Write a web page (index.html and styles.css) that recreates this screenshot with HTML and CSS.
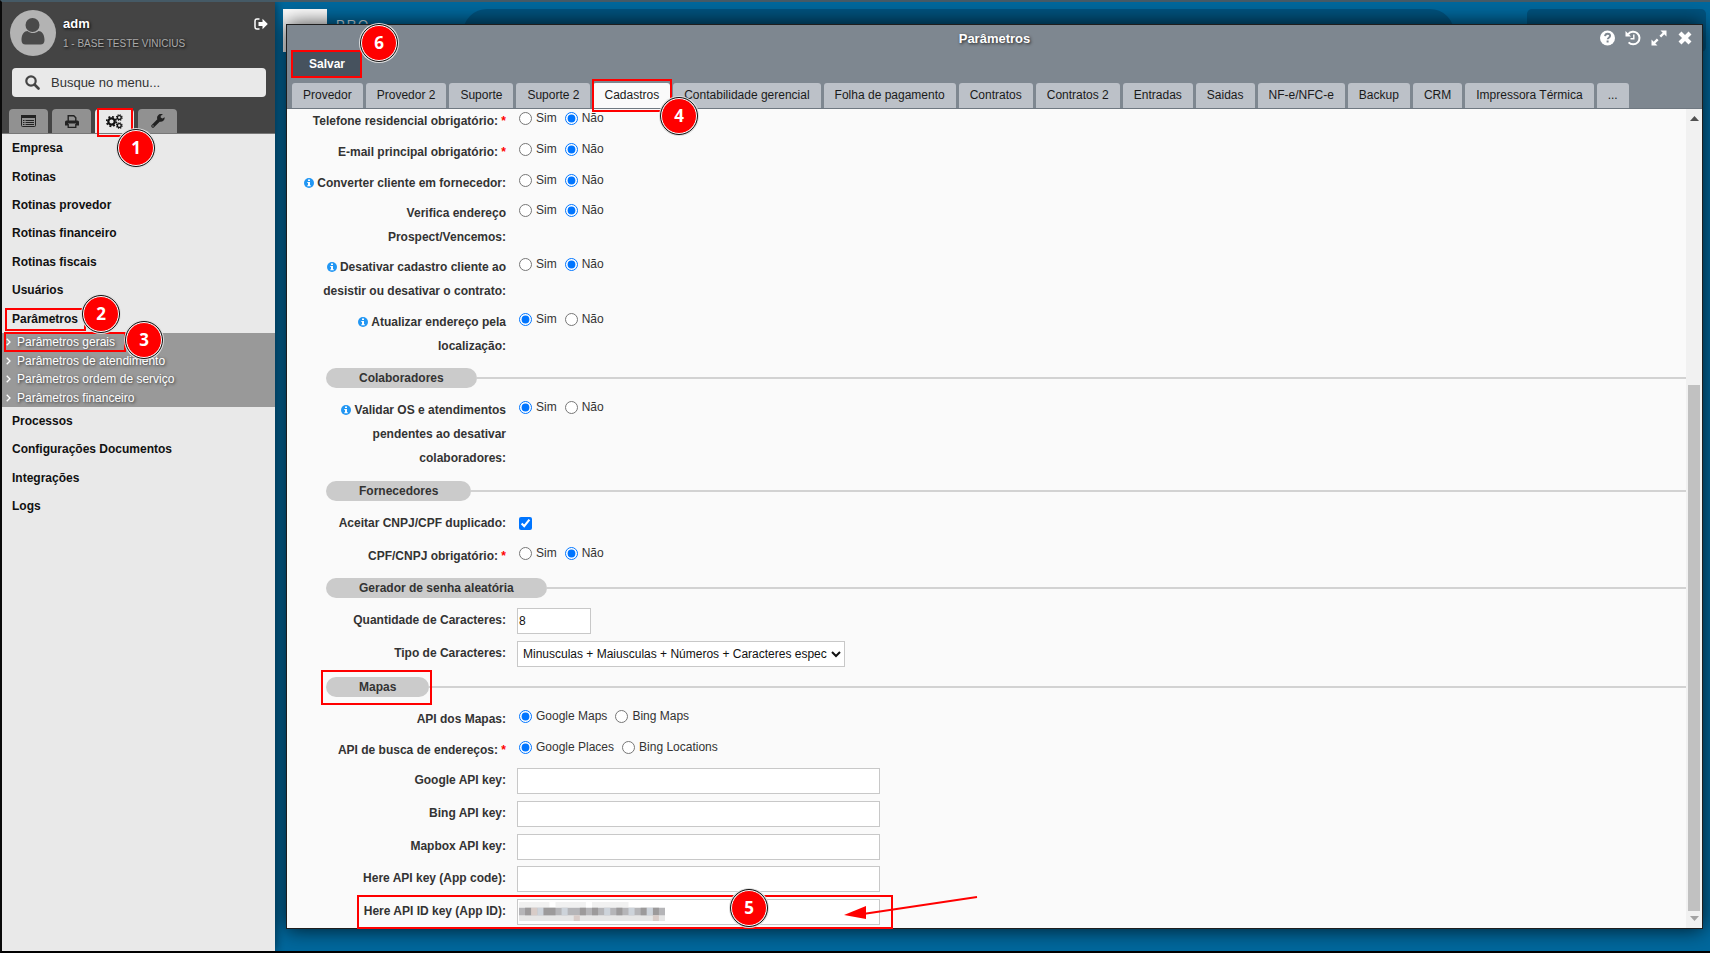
FILE: index.html
```html
<!DOCTYPE html>
<html lang="pt-BR">
<head>
<meta charset="utf-8">
<title>Parâmetros</title>
<link rel="stylesheet" href="styles.css">
</head>
<body>
<div class="app">
  <aside class="sidebar">
    <header class="side-head">
      <div class="user">
        <svg class="avatar" viewBox="0 0 46 46"><circle cx="23" cy="23" r="23" fill="#b3b3b3"/><circle cx="22.500" cy="15" r="7" fill="#4a4a4a"/><path d="M11.500 30c0-6 3-9 6-9 2 1.500 3.500 2 5.500 2s3.500-.5 5.500-2c3 0 6 3 6 9 0 3-1.500 4.500-4 4.500H15.500c-2.500 0-4-1.500-4-4.500z" fill="#4a4a4a"/></svg>
        <div class="user-text">
          <strong class="user-name">adm</strong>
          <span class="user-base">1 - BASE TESTE VINICIUS</span>
        </div>
        <button class="icon-btn logout" aria-label="Sair"><svg width="14" height="12" viewBox="0 0 14 12"><path d="M5.500 1H3a2 2 0 0 0-2 2v6a2 2 0 0 0 2 2h2.500" fill="none" stroke="#fff" stroke-width="1.500"/><path d="M4.500 4h4V.8L13.800 6 8.500 11.200V8h-4z" fill="#fff"/></svg></button>
      </div>
      <label class="search">
        <svg width="15" height="15" viewBox="0 0 15 15"><circle cx="6" cy="6" r="4.700" fill="none" stroke="#444" stroke-width="2.200"/><path d="M9.500 9.500l4 4" stroke="#444" stroke-width="2.600" stroke-linecap="round"/></svg>
        <input class="search-input" type="text" placeholder="Busque no menu..." aria-label="Busque no menu">
      </label>
      <div class="side-tabs">
        <button class="side-tab" aria-label="Janelas"><svg width="15" height="12" viewBox="0 0 15 12"><rect x=".5" y=".5" width="14" height="11" rx="1" fill="none" stroke="#222"/><path d="M0 0h15v3H0z" fill="#222"/><path d="M2 5.500h1.500M2 7.500h1.500M2 9.500h1.500M4.500 5.500H13M4.500 7.500H13M4.500 9.500H13" stroke="#222"/></svg></button>
        <button class="side-tab" aria-label="Imprimir"><svg width="14" height="13" viewBox="0 0 14 13"><path d="M3.200 6V.8h5.600l2 2V6" fill="none" stroke="#222" stroke-width="1.400"/><path d="M0 7a1.500 1.500 0 0 1 1.500-1.500h11A1.500 1.500 0 0 1 14 7v3.500h-3v-2H3v2H0z" fill="#222"/><path d="M3.200 9v3.300h7.600V9" fill="none" stroke="#222" stroke-width="1.300"/></svg></button>
        <button class="side-tab side-tab--on" aria-label="Configurações"><svg width="17" height="15" viewBox="0 0 17 15"><circle cx="5.500" cy="7.500" r="3.200" fill="none" stroke="#111" stroke-width="2.200"/><circle cx="5.500" cy="7.500" r="4.800" fill="none" stroke="#111" stroke-width="1.700" stroke-dasharray="1.900 1.870"/><circle cx="13.300" cy="3.500" r="1.900" fill="none" stroke="#111" stroke-width="1.300"/><circle cx="13.300" cy="3.500" r="2.800" fill="none" stroke="#111" stroke-width="1.100" stroke-dasharray="1.200 1"/><circle cx="13.300" cy="11.500" r="1.900" fill="none" stroke="#111" stroke-width="1.300"/><circle cx="13.300" cy="11.500" r="2.800" fill="none" stroke="#111" stroke-width="1.100" stroke-dasharray="1.200 1"/></svg></button>
        <button class="side-tab" aria-label="Ferramentas"><svg width="14" height="14" viewBox="0 0 14 14"><path d="M13.600 3.200l-2.200 1.300-1.700-1V1.700L11.900.4A4 4 0 0 0 6.300 5.300L.7 10.900a1.700 1.700 0 0 0 2.400 2.400l5.600-5.600a4 4 0 0 0 4.900-4.500zM2 12.700a.7.700 0 1 1 0-1.400.7.700 0 0 1 0 1.400z" fill="#222"/></svg></button>
      </div>
    </header>
    <nav class="menu">
      <ul class="menu-group menu-group--top">
        <li><a href="#">Empresa</a></li>
        <li><a href="#">Rotinas</a></li>
        <li><a href="#">Rotinas provedor</a></li>
        <li><a href="#">Rotinas financeiro</a></li>
        <li><a href="#">Rotinas fiscais</a></li>
        <li><a href="#">Usuários</a></li>
        <li><a href="#">Parâmetros</a></li>
      </ul>
      <ul class="submenu">
        <li><a href="#"><svg class="chev" viewBox="0 0 5 8"><path d="M.7.7L4 4 .7 7.300"/></svg>Parâmetros gerais</a></li>
        <li><a href="#"><svg class="chev" viewBox="0 0 5 8"><path d="M.7.7L4 4 .7 7.300"/></svg>Parâmetros de atendimento</a></li>
        <li><a href="#"><svg class="chev" viewBox="0 0 5 8"><path d="M.7.7L4 4 .7 7.300"/></svg>Parâmetros ordem de serviço</a></li>
        <li><a href="#"><svg class="chev" viewBox="0 0 5 8"><path d="M.7.7L4 4 .7 7.300"/></svg>Parâmetros financeiro</a></li>
      </ul>
      <ul class="menu-group menu-group--bottom">
        <li><a href="#">Processos</a></li>
        <li><a href="#">Configurações Documentos</a></li>
        <li><a href="#">Integrações</a></li>
        <li><a href="#">Logs</a></li>
      </ul>
    </nav>
  </aside>

  <main class="desktop">
    <div class="backdrop">
      <div class="logo-box"></div>
      <span class="logo-text">PRO</span>
      <div class="top-search"></div>
      <div class="top-card"></div>
    </div>
    <section class="window">
      <header class="win-head">
        <div class="win-bar">
          <h1 class="win-title">Parâmetros</h1>
          <div class="win-tools">
            <button class="icon-btn" aria-label="Ajuda"><svg width="16" height="16" viewBox="0 0 16 16"><circle cx="8.500" cy="8" r="7.500" fill="#fff"/><path d="M6 6.200c.2-1.700 1.200-2.500 2.600-2.500s2.500.9 2.500 2.100c0 1.900-2.400 1.900-2.400 3.500" fill="none" stroke="#7e8790" stroke-width="1.900"/><path d="M7.600 10.500h2v2h-2z" fill="#7e8790"/></svg></button>
            <button class="icon-btn" aria-label="Histórico"><svg width="16" height="16" viewBox="0 0 16 16"><path d="M3.200 4.200A6.300 6.300 0 1 1 3.600 12.400" fill="none" stroke="#fff" stroke-width="2"/><path d="M.5 1v5.500H6z" fill="#fff"/><path d="M8.800 4.500v4.200H5.500" fill="none" stroke="#fff" stroke-width="1.400"/></svg></button>
            <button class="icon-btn" aria-label="Expandir"><svg width="16" height="16" viewBox="0 0 16 16"><path d="M9.500.5h6v6zM.5 9.500v6h6z" fill="#fff"/><path d="M13 3L9.300 6.700M6.700 9.300L3 13" stroke="#fff" stroke-width="2.400"/></svg></button>
            <button class="icon-btn" aria-label="Fechar"><svg width="16" height="16" viewBox="0 0 16 16"><path d="M3 3l10 10M13 3L3 13" stroke="#fff" stroke-width="4.200"/></svg></button>
          </div>
        </div>
        <div class="actions"><button class="save">Salvar</button></div>
        <div class="tabs" role="tablist">
          <button class="tab" role="tab">Provedor</button>
          <button class="tab" role="tab">Provedor 2</button>
          <button class="tab" role="tab">Suporte</button>
          <button class="tab" role="tab">Suporte 2</button>
          <button class="tab tab--on" role="tab" aria-selected="true">Cadastros</button>
          <button class="tab" role="tab">Contabilidade gerencial</button>
          <button class="tab" role="tab">Folha de pagamento</button>
          <button class="tab" role="tab">Contratos</button>
          <button class="tab" role="tab">Contratos 2</button>
          <button class="tab" role="tab">Entradas</button>
          <button class="tab" role="tab">Saidas</button>
          <button class="tab" role="tab">NF-e/NFC-e</button>
          <button class="tab" role="tab">Backup</button>
          <button class="tab" role="tab">CRM</button>
          <button class="tab" role="tab">Impressora Térmica</button>
          <button class="tab" role="tab">...</button>
        </div>
      </header>
      <div class="win-body">
        <form class="form">
          <div class="row" role="radiogroup" aria-labelledby="l1">
            <span class="lab" id="l1">Telefone residencial obrigatório: <b class="req">*</b></span>
            <div class="opts"><label class="opt"><input type="radio" name="tel">Sim</label><label class="opt"><input type="radio" name="tel" checked>Não</label></div>
          </div>
          <div class="row" role="radiogroup" aria-labelledby="l2">
            <span class="lab" id="l2">E-mail principal obrigatório: <b class="req">*</b></span>
            <div class="opts"><label class="opt"><input type="radio" name="mail">Sim</label><label class="opt"><input type="radio" name="mail" checked>Não</label></div>
          </div>
          <div class="row row--tall" role="radiogroup" aria-labelledby="l3">
            <span class="lab" id="l3"><svg class="info" viewBox="0 0 10 10"><circle cx="5" cy="5" r="5"/><path d="M4 1.500h2V3H4zM3.300 4H6v3.200h.8v1.100H3.300V7.200H4V5H3.300z"/></svg> Converter cliente em fornecedor:</span>
            <div class="opts"><label class="opt"><input type="radio" name="conv">Sim</label><label class="opt"><input type="radio" name="conv" checked>Não</label></div>
          </div>
          <div class="row row--tall" role="radiogroup" aria-labelledby="l4">
            <span class="lab" id="l4">Verifica endereço<br>Prospect/Vencemos:</span>
            <div class="opts"><label class="opt"><input type="radio" name="ver">Sim</label><label class="opt"><input type="radio" name="ver" checked>Não</label></div>
          </div>
          <div class="row" role="radiogroup" aria-labelledby="l5">
            <span class="lab" id="l5"><svg class="info" viewBox="0 0 10 10"><circle cx="5" cy="5" r="5"/><path d="M4 1.500h2V3H4zM3.300 4H6v3.200h.8v1.100H3.300V7.200H4V5H3.300z"/></svg> Desativar cadastro cliente ao<br>desistir ou desativar o contrato:</span>
            <div class="opts"><label class="opt"><input type="radio" name="des">Sim</label><label class="opt"><input type="radio" name="des" checked>Não</label></div>
          </div>
          <div class="row row--tall" role="radiogroup" aria-labelledby="l6">
            <span class="lab" id="l6"><svg class="info" viewBox="0 0 10 10"><circle cx="5" cy="5" r="5"/><path d="M4 1.500h2V3H4zM3.300 4H6v3.200h.8v1.100H3.300V7.200H4V5H3.300z"/></svg> Atualizar endereço pela<br>localização:</span>
            <div class="opts"><label class="opt"><input type="radio" name="atu" checked>Sim</label><label class="opt"><input type="radio" name="atu">Não</label></div>
          </div>

          <h2 class="section"><span class="pill">Colaboradores</span></h2>
          <div class="row" role="radiogroup" aria-labelledby="l7">
            <span class="lab" id="l7"><svg class="info" viewBox="0 0 10 10"><circle cx="5" cy="5" r="5"/><path d="M4 1.500h2V3H4zM3.300 4H6v3.200h.8v1.100H3.300V7.200H4V5H3.300z"/></svg> Validar OS e atendimentos<br>pendentes ao desativar<br>colaboradores:</span>
            <div class="opts"><label class="opt"><input type="radio" name="val" checked>Sim</label><label class="opt"><input type="radio" name="val">Não</label></div>
          </div>

          <h2 class="section"><span class="pill">Fornecedores</span></h2>
          <div class="row row--check">
            <label class="lab" for="dup">Aceitar CNPJ/CPF duplicado:</label>
            <input class="check" id="dup" type="checkbox" checked>
          </div>
          <div class="row row--tall" role="radiogroup" aria-labelledby="l8">
            <span class="lab" id="l8">CPF/CNPJ obrigatório: <b class="req">*</b></span>
            <div class="opts"><label class="opt"><input type="radio" name="cpf">Sim</label><label class="opt"><input type="radio" name="cpf" checked>Não</label></div>
          </div>

          <h2 class="section"><span class="pill">Gerador de senha aleatória</span></h2>
          <div class="row">
            <label class="lab" for="qtd">Quantidade de Caracteres:</label>
            <input class="field field--short" id="qtd" type="text" value="8">
          </div>
          <div class="row row--tall">
            <label class="lab" for="tipo">Tipo de Caracteres:</label>
            <select class="field field--select" id="tipo"><option>Minusculas + Maiusculas + Números + Caracteres especiais</option></select>
          </div>

          <h2 class="section"><span class="pill">Mapas</span></h2>
          <div class="row" role="radiogroup" aria-labelledby="l9">
            <span class="lab" id="l9">API dos Mapas:</span>
            <div class="opts"><label class="opt"><input type="radio" name="map" checked>Google Maps</label><label class="opt"><input type="radio" name="map">Bing Maps</label></div>
          </div>
          <div class="row row--tall" role="radiogroup" aria-labelledby="l10">
            <span class="lab" id="l10">API de busca de endereços: <b class="req">*</b></span>
            <div class="opts"><label class="opt"><input type="radio" name="end" checked>Google Places</label><label class="opt"><input type="radio" name="end">Bing Locations</label></div>
          </div>
          <div class="row"><label class="lab" for="k1">Google API key:</label><input class="field" id="k1" type="text"></div>
          <div class="row"><label class="lab" for="k2">Bing API key:</label><input class="field" id="k2" type="text"></div>
          <div class="row row--tall"><label class="lab" for="k3">Mapbox API key:</label><input class="field" id="k3" type="text"></div>
          <div class="row"><label class="lab" for="k4">Here API key (App code):</label><input class="field" id="k4" type="text"></div>
          <div class="row"><label class="lab" for="k5">Here API ID key (App ID):</label><input class="field" id="k5" type="text"></div>
        </form>
        <div class="scroll">
          <svg width="9" height="5" viewBox="0 0 9 5"><path d="M0 5L4.500 0 9 5z" fill="#505050"/></svg>
          <div class="track"><div class="thumb"></div></div>
          <svg width="9" height="5" viewBox="0 0 9 5"><path d="M0 0h9L4.500 5z" fill="#a3a3a3"/></svg>
        </div>
      </div>
    </section>
  </main>

  <div class="marks">
    <div class="box b1"></div><div class="box b2"></div><div class="box b3"></div><div class="box b4"></div><div class="box b5"></div><div class="box b6"></div><div class="box b7"></div>
    <svg class="mosaic" viewBox="0 0 24 10" preserveAspectRatio="none">
      <path fill="#f1f1f1" d="M0 0h5v3H0zM6 0h5v3H6zM12 0h6v3h-6z"/>
      <path fill="#e6e6e6" d="M0 6h24v4H0z"/>
      <path fill="#b5b5b8" d="M0 3h24v4H0z"/>
      <path fill="#9c9a9b" d="M1 3h1v4H1zM4 3h2v4H4zM10 3h1v4h-1zM12 3h1v4h-1zM16 3h1v4h-1zM20 3h1v4h-1zM22 3h1v4h-1z"/>
      <path fill="#cdd3da" d="M3 3h1v4H3zM7 3h1v4H7zM14 3h1v4h-1zM18 3h1v4h-1zM21 3h1v4h-1z"/>
      <path fill="#d8ccc8" d="M2 3h1v4H2zM9 7h1v3H9zM22 7h1v3h-1z"/>
    </svg>
    <svg class="arrow" viewBox="0 0 136 36"><path d="M134 2L20 19" stroke="#f00" stroke-width="2"/><path d="M1 20l22-9v13z" fill="#f00"/></svg>
    <span class="dot d1">1</span><span class="dot d2">2</span><span class="dot d3">3</span><span class="dot d4">4</span><span class="dot d5">5</span><span class="dot d6">6</span>
  </div>
</div>
</body>
</html>
```
FILE: styles.css
```css
* { box-sizing: border-box; }
body {
  margin: 0;
  font: 12px "Liberation Sans", Arial, sans-serif;
  color: #333;
  background: #000;
}
button, input, select { font: inherit; color: inherit; margin: 0; }
button { border: 0; padding: 0; cursor: pointer; }
ul { list-style: none; margin: 0; padding: 0; }
a { color: inherit; text-decoration: none; }

.app {
  position: relative;
  display: flex;
  height: 100vh;
  min-height: 600px;
  overflow: hidden;
  border-top: 2px solid #455a66;
  border-left: 2px solid #0a0a0a;
  border-bottom: 2px solid #000;
}

/* Sidebar */
.sidebar {
  flex: 0 0 273px;
  display: flex;
  flex-direction: column;
  background: #e9e9e9;
  box-shadow: 0 0 10px rgba(0, 0, 0, .6);
  z-index: 1;
}
.side-head {
  display: flex;
  flex-direction: column;
  height: 132px;
  padding: 8px 7px 0;
  background: #444;
  border-bottom: 1px solid #777;
}
.user { display: flex; gap: 7px; padding-left: 1px; }
.avatar { width: 46px; height: 46px; }
.user-text {
  flex: 1;
  display: flex;
  flex-direction: column;
  gap: 6px;
  padding-top: 6px;
  text-shadow: 1px 1px 3px #000;
}
.user-name { font-size: 13px; line-height: 16px; color: #fff; }
.user-base { font-size: 10px; line-height: 12px; color: #aaa; }
.icon-btn { display: flex; background: none; }
.logout { align-self: flex-start; padding-top: 8px; }
.search {
  display: flex;
  align-items: center;
  gap: 11px;
  height: 29px;
  margin: 12px 2px 0 3px;
  padding-left: 13px;
  border-radius: 4px;
  background: #e9e9e9;
}
.search-input {
  flex: 1;
  min-width: 0;
  padding: 0 0 1px;
  border: 0;
  outline: 0;
  font-size: 13px;
  background: none;
}
.search-input::placeholder { color: #333; }
.side-tabs { display: flex; gap: 4px; margin-top: auto; }
.side-tab {
  display: flex;
  align-items: center;
  justify-content: center;
  width: 39px;
  height: 24px;
  border-radius: 4px 4px 0 0;
  background: #919191;
}
.side-tab--on { background: #e9e9e9; }
.menu { display: flex; flex-direction: column; }
.menu-group { display: flex; flex-direction: column; font-weight: bold; color: #111; }
.menu-group--top { height: 199px; }
.menu-group--bottom { height: 113px; }
.menu-group li { flex: 1; display: flex; align-items: center; padding-left: 10px; }
.submenu {
  display: flex;
  flex-direction: column;
  height: 74px;
  background: #999;
  color: #fff;
  text-shadow: 1px 1px 3px #333;
}
.submenu li { flex: 1; display: flex; align-items: center; padding-left: 4px; }
.submenu a { display: flex; align-items: center; gap: 6px; }
.chev { width: 5px; height: 8px; fill: none; stroke: #fff; stroke-width: 1.300; }

/* Desktop behind the window */
.desktop {
  position: relative;
  flex: 1;
  min-width: 0;
  display: flex;
  padding: 22px 7px 22px 11px;
  background: #00689d;
}
.backdrop {
  position: absolute;
  inset: 7px 4px auto 8px;
  display: flex;
  align-items: flex-start;
}
.logo-box { width: 44px; height: 43px; background: #fff; }
.logo-text {
  width: 136px;
  padding: 8px 0 0 9px;
  font-size: 13px;
  line-height: 16px;
  letter-spacing: 2px;
  color: #d5e4ec;
}
.top-search { flex: 1; height: 50px; border-radius: 24px; background: #00537f; }
.top-card { width: 179px; height: 43px; margin-left: 73px; border-radius: 5px; background: #00537f; }

/* Window */
.window {
  position: relative;
  flex: 1;
  min-width: 0;
  display: flex;
  flex-direction: column;
  border: 1px solid #1e1e1e;
  background: #fafafa;
  box-shadow: 0 0 20px rgba(0, 0, 0, .8);
}
.win-head { padding: 0 5px; background: #7e8790; border-bottom: 1px solid #6f7881; }
.win-bar { position: relative; display: flex; justify-content: center; height: 26px; padding-top: 5px; }
.win-title {
  margin: 0;
  font-size: 13px;
  line-height: 18px;
  color: #fff;
  text-shadow: 1px 1px 3px #222;
}
.win-tools { position: absolute; right: 4px; top: 5px; display: flex; gap: 10px; }
.actions { display: flex; height: 32px; }
.save { width: 70px; height: 27px; padding-bottom: 1px; font-weight: bold; color: #fff; background: #46525e; }
.tabs { display: flex; gap: 3px; }
.tab {
  height: 25px;
  padding: 0 11px 2px;
  border-radius: 3px 3px 0 0;
  white-space: nowrap;
  color: #1a1a1a;
  background: #bcc1c8;
}
.tab--on { background: #fafafa; }
.win-body { flex: 1; min-height: 0; display: flex; }
.form { flex: 1; min-width: 0; overflow: hidden; }
.row {
  display: grid;
  grid-template-columns: 219px 1fr;
  column-gap: 11px;
  align-items: start;
  justify-items: start;
  padding-bottom: 7px;
}
.row--tall { padding-bottom: 6px; }
.row--check { padding-bottom: 9px; }
.lab { justify-self: end; text-align: right; line-height: 24px; font-weight: bold; white-space: nowrap; }
.req { color: #f00; }
.info { width: 10px; height: 10px; vertical-align: -1px; }
.info circle { fill: #2196f3; }
.info path { fill: #fff; }
.opts { display: flex; gap: 8px; padding-left: 2px; }
.opt { display: flex; align-items: center; gap: 4px; height: 18px; }
.opt input { width: 13px; height: 13px; accent-color: #0075ff; }
.check { width: 13px; height: 13px; margin: 6px 0 0 2px; accent-color: #0075ff; }
.field {
  width: 363px;
  height: 26px;
  padding: 0 1px;
  border: 1px solid #c8c8c8;
  color: #111;
  background: #fff;
}
.field--short { width: 74px; }
.field--select { width: 328px; }
.section {
  display: flex;
  align-items: center;
  margin: 4px 0 10px 39px;
  font-size: 12px;
  line-height: 20px;
}
.section::after {
  content: "";
  flex: 1;
  height: 2px;
  background: #d2d2d2;
}
.pill { padding: 0 33px; border-radius: 10px; background: #cbcbcb; }
.scroll {
  width: 16px;
  display: flex;
  flex-direction: column;
  align-items: center;
  gap: 5px;
  padding: 7px 0;
  background: #f1f1f1;
}
.track { flex: 1; display: flex; flex-direction: column; justify-content: flex-end; }
.thumb { width: 12px; height: 67%; background: #c1c1c1; }

/* Annotations drawn over the interface */
.marks { position: absolute; inset: 0; z-index: 2; pointer-events: none; }
.box { position: absolute; border: 2px solid #f00; }
.b1 { left: 95px; top: 106px; width: 36px; height: 29px; }
.b2 { left: 3px; top: 306px; width: 81px; height: 23px; }
.b3 { left: 2px; top: 330px; width: 122px; height: 20px; }
.b4 { left: 590px; top: 77px; width: 80px; height: 33px; }
.b5 { left: 355px; top: 893px; width: 536px; height: 34px; }
.b6 { left: 289px; top: 48px; width: 71px; height: 28px; }
.b7 { left: 319px; top: 668px; width: 111px; height: 35px; }
.dot {
  position: absolute;
  width: 36px;
  height: 36px;
  border: 1px solid #fff;
  border-radius: 50%;
  outline: 1px solid #111;
  box-shadow: 0 0 0 2px #ddd;
  font: bold 17px/34px "Open Sans", sans-serif;
  text-align: center;
  color: #fff;
  background: #f00;
}
.d1 { left: 116px; top: 128px; }
.d2 { left: 81px; top: 294px; }
.d3 { left: 124px; top: 320px; }
.d4 { left: 659px; top: 96px; }
.d5 { left: 729px; top: 888px; }
.d6 { left: 359px; top: 23px; }
.mosaic { position: absolute; left: 517px; top: 900px; width: 146px; height: 19px; }
.arrow { position: absolute; left: 841px; top: 893px; width: 136px; height: 36px; }
```
